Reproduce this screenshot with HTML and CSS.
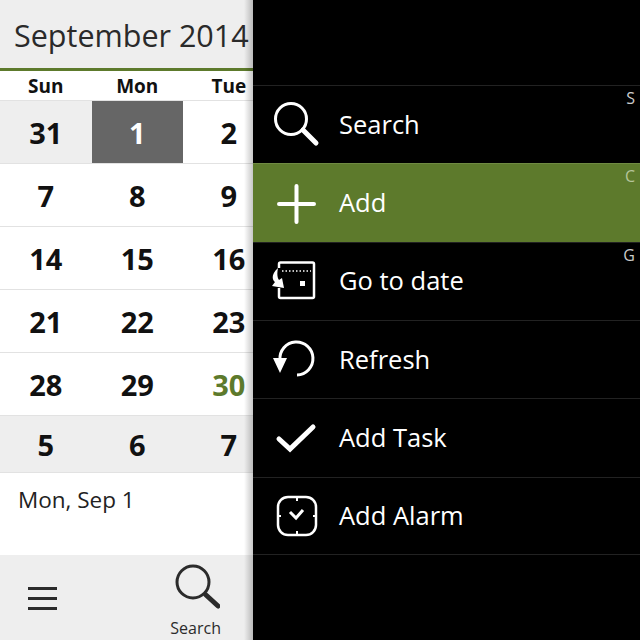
FILE: index.html
```html
<!DOCTYPE html>
<html lang="en">
<head>
  <meta charset="UTF-8">
  <meta name="viewport" content="width=device-width, initial-scale=1.0">
  <title>Calendar</title>
  <link rel="stylesheet" href="styles.css">
</head>
<body>

  <div class="screen">
    <section class="calendar">
      <header class="month">September 2014</header>

      <div class="weekdays">
        <div>Sun</div>
        <div>Mon</div>
        <div>Tue</div>
      </div>

      <div class="week">
        <div class="day outside">31</div>
        <div class="day selected">1</div>
        <div class="day">2</div>
      </div>
      <div class="week">
        <div class="day">7</div>
        <div class="day">8</div>
        <div class="day">9</div>
      </div>
      <div class="week">
        <div class="day">14</div>
        <div class="day">15</div>
        <div class="day">16</div>
      </div>
      <div class="week">
        <div class="day">21</div>
        <div class="day">22</div>
        <div class="day">23</div>
      </div>
      <div class="week">
        <div class="day">28</div>
        <div class="day">29</div>
        <div class="day today">30</div>
      </div>
      <div class="week last">
        <div class="day outside">5</div>
        <div class="day outside">6</div>
        <div class="day outside">7</div>
      </div>

      <p class="selected-date">Mon, Sep 1</p>

      <footer class="toolbar">
        <div class="hamburger"><span></span><span></span><span></span></div>
        <div class="toolbar-action">
          <svg width="48" height="48" viewBox="0 0 48 48" fill="none" stroke="#2b2b2b">
            <circle cx="21" cy="20" r="16" stroke-width="3"/>
            <path d="M34 33L46 44" stroke-width="5" stroke-linecap="round"/>
          </svg>
          <span>Search</span>
        </div>
      </footer>
    </section>

    <nav class="menu">
      <div class="menu-item">
        <svg width="48" height="48" viewBox="0 0 48 48" fill="none" stroke="#fff">
          <circle cx="19" cy="18" r="15.5" stroke-width="3"/>
          <path d="M31 29L44 42" stroke-width="5" stroke-linecap="round"/>
        </svg>
        <span class="label">Search</span>
        <span class="shortcut">S</span>
      </div>
      <div class="menu-item active">
        <svg width="48" height="48" viewBox="0 0 48 48" fill="none" stroke="#fff" stroke-width="4" stroke-linecap="round">
          <path d="M7 25H42M24.500 7V43"/>
        </svg>
        <span class="label">Add</span>
        <span class="shortcut">C</span>
      </div>
      <div class="menu-item">
        <svg width="48" height="48" viewBox="0 0 48 48" fill="none" stroke="#fff">
          <path d="M7 11V7C7 6 7.500 5.500 8.500 5.500H40.500C41.500 5.500 42 6 42 7V39.500C42 40.500 41.500 41 40.500 41H8.500C7.500 41 7 40.500 7 39.500V31" stroke-width="2.500"/>
          <path d="M10 14H39" stroke-width="1.500" stroke-dasharray="1.500 2"/>
          <rect x="28" y="24" width="5" height="5" fill="#fff" stroke="none"/>
          <path d="M6 11C-1 17 0 23 3 25L0 29L12 31L10 21L7 23C5 20 5 16 6 11Z" fill="#fff" stroke="none"/>
        </svg>
        <span class="label">Go to date</span>
        <span class="shortcut">G</span>
      </div>
      <div class="menu-item">
        <svg width="48" height="48" viewBox="0 0 48 48" fill="none" stroke="#fff">
          <path d="M8 24A16.500 16.500 0 1 1 25 39" stroke-width="3"/>
          <path d="M1 22H15L8 37Z" fill="#fff" stroke="none"/>
        </svg>
        <span class="label">Refresh</span>
      </div>
      <div class="menu-item">
        <svg width="48" height="48" viewBox="0 0 48 48" fill="none" stroke="#fff">
          <path d="M7 25L18 35L41 13" stroke-width="5" stroke-linecap="round"/>
        </svg>
        <span class="label">Add Task</span>
      </div>
      <div class="menu-item">
        <svg width="48" height="48" viewBox="0 0 48 48" fill="none" stroke="#fff">
          <rect x="6" y="5" width="38" height="38" rx="10" stroke-width="2.500"/>
          <path d="M25 5V9M25 39V43M6 24H9M41 24H44" stroke-width="2"/>
          <path d="M18 20L24 26L31 18" stroke-width="3"/>
        </svg>
        <span class="label">Add Alarm</span>
      </div>
    </nav>
  </div>

</body>
</html>
```

FILE: styles.css
```css
body {
  margin: 0;
  padding: 0;
  background-color: #000;
  font-family: 'Open Sans', 'Noto Sans', sans-serif;
}

.screen {
  display: flex;
  width: 640px;
  height: 640px;
  overflow: hidden;
}

/* left panel, cut off by the menu that slid over it */
.calendar {
  position: relative;
  display: flex;
  flex-direction: column;
  flex: 0 0 253px;
  width: 253px;
  height: 640px;
  overflow: hidden;
  background-color: #fff;
  color: #111;
}

.calendar::after {
  content: '';
  position: absolute;
  top: 0;
  right: 0;
  bottom: 0;
  width: 9px;
  background: linear-gradient(to right, rgba(0, 0, 0, 0), rgba(0, 0, 0, 0.22));
}

.month {
  height: 68px;
  line-height: 71px;
  padding-left: 14px;
  background-color: #eee;
  border-bottom: 3px solid #5d7a2c;
  color: #2a2a2a;
  font-size: 30.5px;
  white-space: nowrap;
}

.weekdays,
.week {
  display: grid;
  grid-template-columns: repeat(3, 91.5px);
  width: 274.5px;
}

.weekdays {
  height: 29px;
  line-height: 30px;
  border-bottom: 1px solid #e2e2e2;
  font-size: 19px;
  font-weight: 700;
  text-align: center;
}

.week {
  height: 62px;
  border-bottom: 1px solid #e2e2e2;
}

.week.last {
  height: 56px;
}

.day {
  display: flex;
  justify-content: center;
  align-items: center;
  font-size: 29px;
  font-weight: 700;
}

.day.outside {
  background-color: #eee;
}

.day.selected {
  background-color: #666;
  color: #fff;
}

.day.today {
  color: #5d7a2c;
}

.selected-date {
  height: 82px;
  margin: 0;
  padding: 11px 0 0 18px;
  box-sizing: border-box;
  color: #222;
  font-size: 22.5px;
}

.toolbar {
  display: flex;
  justify-content: space-between;
  height: 85px;
  padding: 7px 32px 0 28px;
  box-sizing: border-box;
  background-color: #eee;
  color: #2b2b2b;
}

.hamburger {
  display: flex;
  flex-direction: column;
  gap: 7px;
  width: 29px;
  margin-top: 25px;
}

.hamburger span {
  height: 3px;
  background-color: #2b2b2b;
}

.toolbar-action {
  display: flex;
  flex-direction: column;
  align-items: center;
  gap: 8px;
  font-size: 16px;
  line-height: 20px;
}

.menu {
  flex: 1;
  padding-top: 85px;
  background-color: #000;
  color: #fff;
}

.menu-item {
  position: relative;
  display: flex;
  align-items: center;
  gap: 19px;
  height: 78.33px;
  padding-left: 19px;
  box-sizing: border-box;
  border-top: 1px solid #222;
  font-size: 25.5px;
}

.menu-item:last-child {
  border-bottom: 1px solid #222;
}

.menu-item.active {
  background-color: #5d7a2c;
  border-top-color: #6f8a42;
}

.label {
  margin-top: -2px;
}

.shortcut {
  position: absolute;
  top: 1px;
  right: 5px;
  color: #ccc;
  font-size: 16px;
}

.active .shortcut {
  color: #b5c49a;
}
```
